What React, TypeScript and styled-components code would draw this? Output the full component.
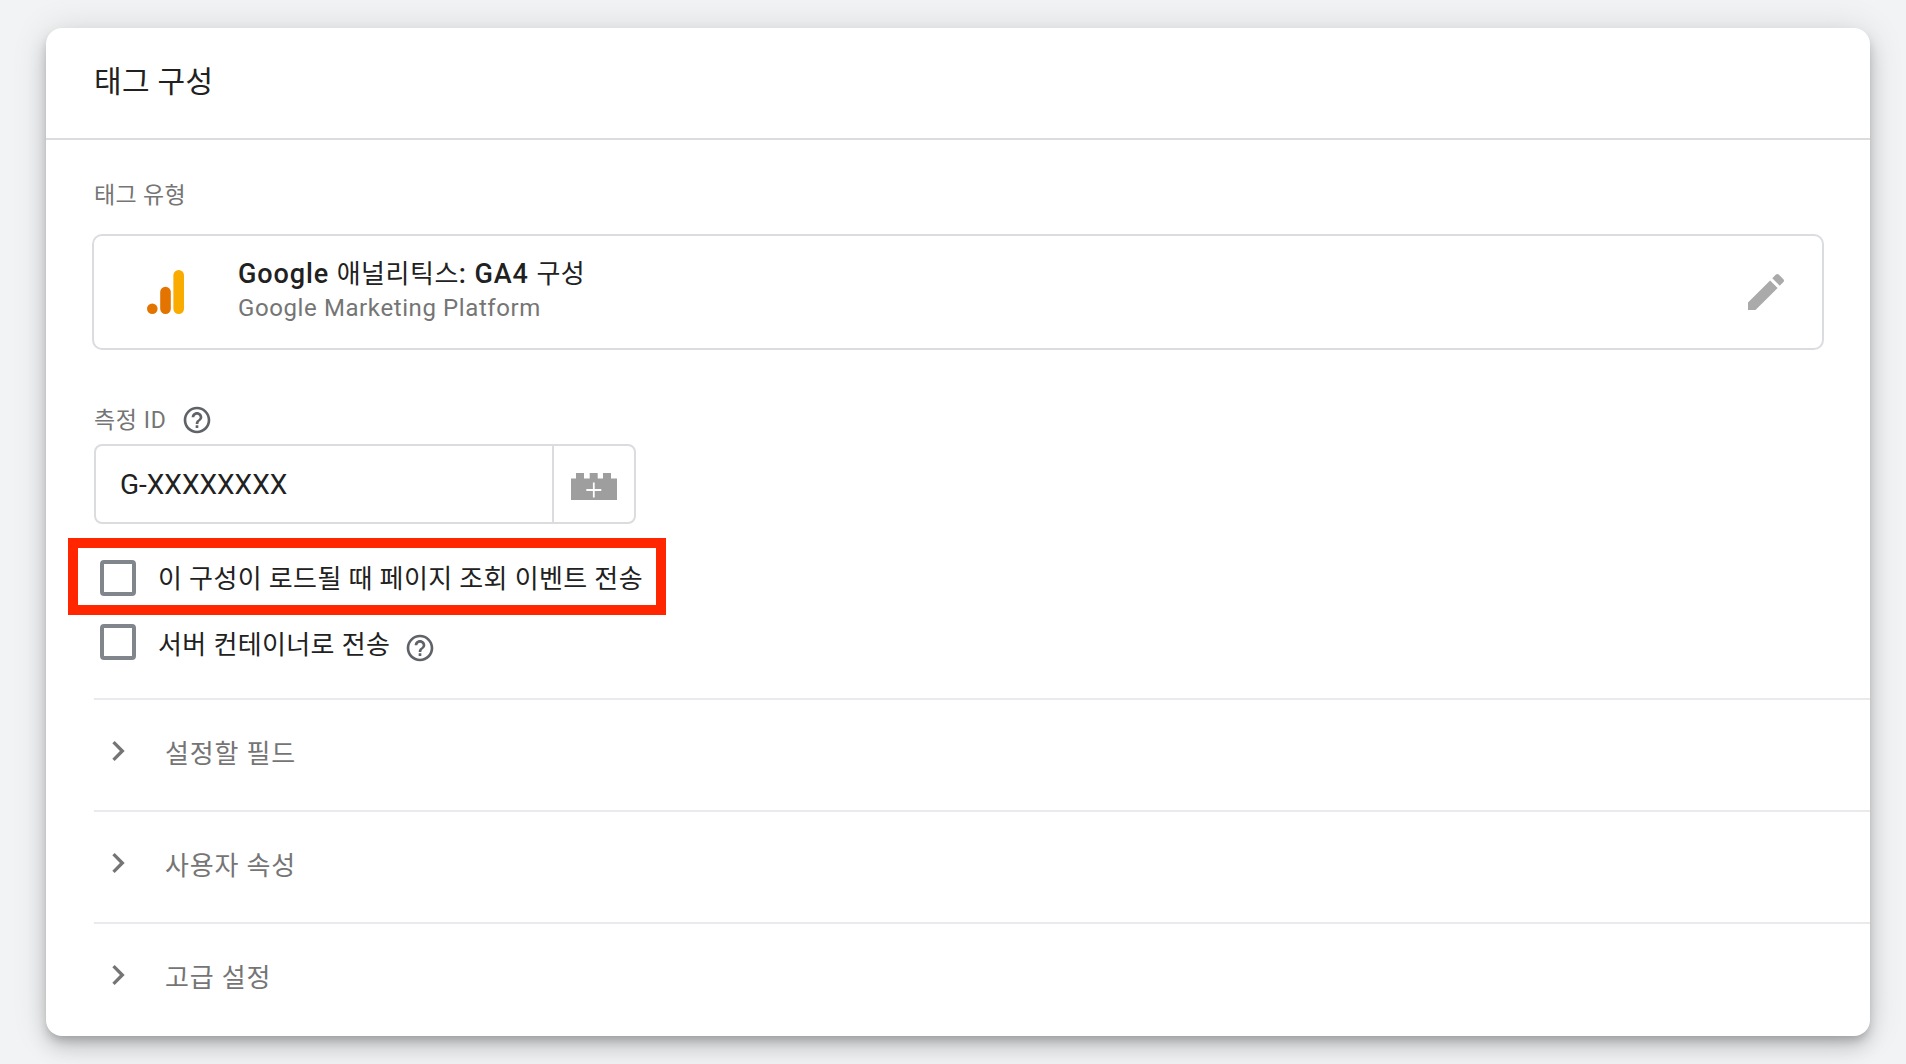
import React from "react";
import styled, { createGlobalStyle } from "styled-components";

const GlobalStyle = createGlobalStyle`
  *, *::before, *::after { box-sizing: border-box; }
  body {
    margin: 0;
    background: #f1f3f4;
    font-family: Roboto, "Noto Sans CJK KR", sans-serif;
    color: #212121;
  }
`;

const Page = styled.main`
  height: 1064px;
  padding: 28px 36px 28px 46px;
  overflow: hidden;
`;

const Card = styled.section`
  height: 1008px;
  border-radius: 16px;
  background: #fff;
  box-shadow:
    0 6px 10px -2px rgba(0, 0, 0, 0.2),
    0 12px 20px rgba(0, 0, 0, 0.14),
    0 2px 36px rgba(0, 0, 0, 0.12);
`;

const CardHeader = styled.header`
  height: 112px;
  padding: 34px 48px 0;
  border-bottom: 2px solid #dadce0;
`;

const CardTitle = styled.h1`
  margin: 0;
  font-size: 30px;
  font-weight: 400;
  line-height: 40px;
  letter-spacing: 0.3px;
`;

const CardBody = styled.div`
  padding: 40px 0 0 48px;
`;

const Label = styled.div`
  height: 32px;
  font-size: 23px;
  line-height: 32px;
  letter-spacing: 0.3px;
  color: #757575;
`;

const TagType = styled.div`
  display: flex;
  align-items: center;
  height: 116px;
  margin: 22px 46px 0 -2px;
  padding: 0 32px 0 53px;
  border: 2px solid #dadce0;
  border-radius: 10px;
`;

const TagText = styled.div`
  flex: 1;
  align-self: flex-start;
  margin: 19px 0 0 53px;
`;

const TagName = styled.div`
  height: 36px;
  font-size: 27px;
  font-weight: 500;
  line-height: 38px;
  letter-spacing: 0.9px;
`;

const Hangul = styled.span`
  font-size: 26px;
  font-weight: 400;
  letter-spacing: 0.5px;
`;

const TagVendor = styled.div`
  font-size: 24px;
  line-height: 34px;
  letter-spacing: 0.6px;
  color: #757575;
`;

const FieldLabel = styled.div`
  display: flex;
  align-items: center;
  gap: 15px;
  height: 32px;
  margin-top: 54px;
`;

const FieldName = styled(Label)`
  line-height: 33px;
  letter-spacing: 0.6px;
`;

const Field = styled.div`
  display: flex;
  width: 542px;
  height: 80px;
  margin-top: 8px;
  border: 2px solid #dadce0;
  border-radius: 8px;
`;

const FieldValue = styled.div`
  flex: 1;
  padding-left: 24px;
  font-size: 28px;
  line-height: 78px;
`;

const FieldButton = styled.div`
  width: 82px;
  padding: 27px 0 0 17px;
  border-left: 2px solid #dadce0;
`;

const Option = styled.div<{ $highlighted?: boolean }>`
  display: flex;
  align-items: flex-start;
  width: 598px;
  height: ${(p) => (p.$highlighted ? 77 : 83)}px;
  margin: ${(p) => (p.$highlighted ? 14 : 0)}px 0 0 -26px;
  padding: ${(p) => (p.$highlighted ? "12px 0 0 22px" : "9px 0 0 32px")};
  border: ${(p) => (p.$highlighted ? "10px solid #ff2600" : "none")};
`;

const Checkbox = styled.span`
  flex: none;
  width: 36px;
  height: 36px;
  border: 4px solid #80868b;
  border-radius: 4px;
`;

const OptionLabel = styled.span<{ $shift: number }>`
  margin: ${(p) => p.$shift}px 14px 0 22px;
  font-size: 26px;
  line-height: 36px;
  letter-spacing: 0.37px;
  white-space: nowrap;
`;

const HelpSlot = styled.span`
  display: flex;
  padding-top: 8px;
`;

const Section = styled.div`
  display: flex;
  align-items: center;
  gap: 27px;
  height: 112px;
  padding: 0 0 8px 4px;
  border-top: 2px solid #e8eaed;
  font-size: 26px;
  letter-spacing: 0.8px;
  color: #757575;
`;

const Icon = styled.svg`
  display: block;
  flex: none;
`;

const HelpIcon = () => (
  <Icon width="32" height="32" viewBox="0 0 24 24" fill="#5f6368">
    <path d="M11 18h2v-2h-2v2zm1-16C6.48 2 2 6.48 2 12s4.48 10 10 10 10-4.48 10-10S17.52 2 12 2zm0 18c-4.41 0-8-3.59-8-8s3.59-8 8-8 8 3.59 8 8-3.59 8-8 8zm0-14c-2.21 0-4 1.79-4 4h2c0-1.1.9-2 2-2s2 .9 2 2c0 2-3 1.75-3 5h2c0-2.25 3-2.5 3-5 0-2.21-1.79-4-4-4z" />
  </Icon>
);

const AnalyticsLogo = () => (
  <Icon width="38" height="44" viewBox="0 0 38 44">
    <rect x="26.4" width="10.6" height="44" rx="5.3" fill="#f9ab00" />
    <rect x="13.2" y="16.7" width="10.6" height="27.3" rx="5.3" fill="#e37400" />
    <circle cx="5.3" cy="38.7" r="5.3" fill="#e37400" />
  </Icon>
);

const PencilIcon = () => (
  <Icon width="48" height="48" viewBox="0 0 24 24" fill="#aaa">
    <path d="M3 17.25V21h3.75L17.81 9.94l-3.75-3.75L3 17.25zM20.71 7.04c.39-.39.39-1.02 0-1.41l-2.34-2.34c-.39-.39-1.02-.39-1.41 0l-1.83 1.83 3.75 3.75 1.83-1.83z" />
  </Icon>
);

const BrickIcon = () => (
  <Icon width="46" height="27" viewBox="0 0 46 27">
    <path fill="#9e9e9e" d="M0 5.5h5V0h8v5.5h5.7V0h8v5.5H32V0h8v5.5h6V27H0z" />
    <path stroke="#fff" strokeWidth="1.8" d="M15.3 17h15M22.8 9.5v15" />
  </Icon>
);

const ChevronIcon = () => (
  <Icon width="40" height="40" viewBox="0 0 24 24" fill="#757575">
    <path d="M10 6L8.59 7.41 13.17 12l-4.58 4.59L10 18l6-6z" />
  </Icon>
);

const SECTIONS = ["설정할 필드", "사용자 속성", "고급 설정"];

export default function App() {
  return (
    <>
      <GlobalStyle />
      <Page>
        <Card>
          <CardHeader>
            <CardTitle>태그 구성</CardTitle>
          </CardHeader>
          <CardBody>
            <Label>태그 유형</Label>
            <TagType>
              <AnalyticsLogo />
              <TagText>
                <TagName>
                  Google <Hangul>애널리틱스</Hangul>: GA4 <Hangul>구성</Hangul>
                </TagName>
                <TagVendor>Google Marketing Platform</TagVendor>
              </TagText>
              <PencilIcon />
            </TagType>
            <FieldLabel>
              <FieldName>측정 ID</FieldName>
              <HelpIcon />
            </FieldLabel>
            <Field>
              <FieldValue>G-XXXXXXXX</FieldValue>
              <FieldButton>
                <BrickIcon />
              </FieldButton>
            </Field>
            <Option $highlighted>
              <Checkbox />
              <OptionLabel $shift={1}>이 구성이 로드될 때 페이지 조회 이벤트 전송</OptionLabel>
            </Option>
            <Option>
              <Checkbox />
              <OptionLabel $shift={3}>서버 컨테이너로 전송</OptionLabel>
              <HelpSlot>
                <HelpIcon />
              </HelpSlot>
            </Option>
            {SECTIONS.map((name) => (
              <Section key={name}>
                <ChevronIcon />
                <span>{name}</span>
              </Section>
            ))}
          </CardBody>
        </Card>
      </Page>
    </>
  );
}
